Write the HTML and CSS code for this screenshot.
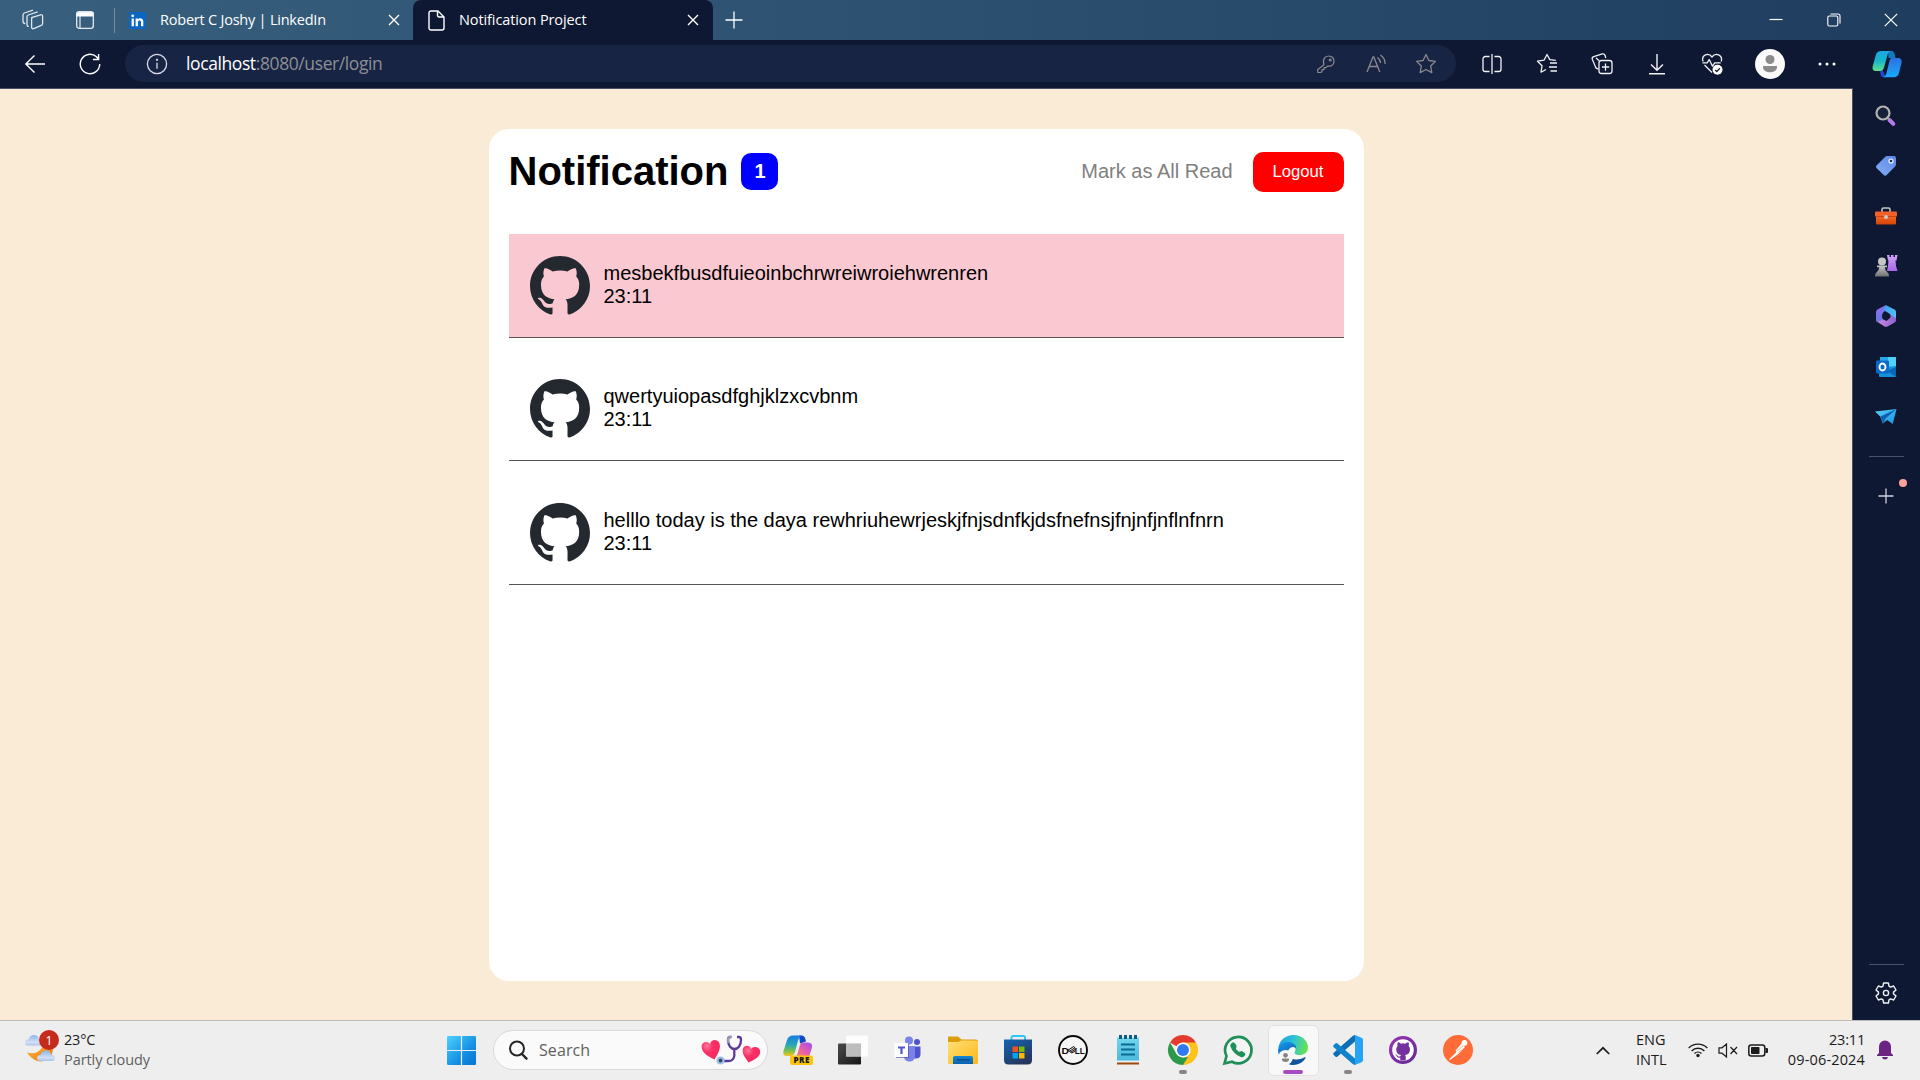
FILE: index.html
```html
<!DOCTYPE html>
<html lang="en">
<head>
<meta charset="utf-8">
<title>Notification Project</title>
<link rel="stylesheet" href="styles.css">
</head>
<body>
<svg class="defs" width="0" height="0" aria-hidden="true">
  <defs>
    <symbol id="octocat" viewBox="0 0 16 16"><path d="M8 0C3.58 0 0 3.58 0 8c0 3.54 2.29 6.53 5.47 7.59.4.07.55-.17.55-.38 0-.19-.01-.82-.01-1.49-2.01.37-2.53-.49-2.69-.94-.09-.23-.48-.94-.82-1.13-.28-.15-.68-.52-.01-.53.63-.01 1.08.58 1.23.82.72 1.21 1.87.87 2.33.66.07-.52.28-.87.51-1.07-1.78-.2-3.64-.89-3.64-3.95 0-.87.31-1.59.82-2.15-.08-.2-.36-1.02.08-2.12 0 0 .67-.21 2.2.82.64-.18 1.32-.27 2-.27s1.36.09 2 .27c1.53-1.04 2.2-.82 2.2-.82.44 1.1.16 1.92.08 2.12.51.56.82 1.27.82 2.15 0 3.07-1.87 3.75-3.65 3.95.29.25.54.73.54 1.48 0 1.07-.01 1.93-.01 2.2 0 .21.15.46.55.38A8.01 8.01 0 0 0 16 8c0-4.42-3.58-8-8-8z"/></symbol>
    <symbol id="cross" viewBox="0 0 12 12"><path d="M1 1l10 10M11 1L1 11" fill="none" stroke="currentColor" stroke-width="1.4"/></symbol>
    <linearGradient id="gWin" x1="0" y1="0" x2="1" y2="1"><stop offset="0" stop-color="#4dd2ff"/><stop offset=".6" stop-color="#1590e4"/><stop offset="1" stop-color="#0574d0"/></linearGradient>
    <linearGradient id="gCopA" x1="0" y1="0" x2="0" y2="1"><stop offset="0" stop-color="#1aa6e8"/><stop offset=".5" stop-color="#19b5c8"/><stop offset="1" stop-color="#5fe08a"/></linearGradient>
    <linearGradient id="gCopB" x1="0" y1="0" x2="0" y2="1"><stop offset="0" stop-color="#2f6fe0"/><stop offset="1" stop-color="#19a9fb"/></linearGradient>
    <linearGradient id="gPreA" x1="0" y1="0" x2="0" y2="1"><stop offset="0" stop-color="#1a7be0"/><stop offset=".45" stop-color="#25a7b8"/><stop offset=".75" stop-color="#7cc04c"/><stop offset="1" stop-color="#f5c71b"/></linearGradient>
    <linearGradient id="gPreB" x1="1" y1="0" x2="0" y2="1"><stop offset="0" stop-color="#9a4df0"/><stop offset=".5" stop-color="#e45dae"/><stop offset="1" stop-color="#fb8a58"/></linearGradient>
    <linearGradient id="gTag" x1="1" y1="0" x2="0" y2="1"><stop offset="0" stop-color="#5a86e6"/><stop offset="1" stop-color="#84aef4"/></linearGradient>
    <linearGradient id="gBox" x1="0" y1="0" x2="0" y2="1"><stop offset="0" stop-color="#fb6a2c"/><stop offset="1" stop-color="#d34408"/></linearGradient>
    <linearGradient id="gPawn" x1="0" y1="0" x2="0" y2="1"><stop offset="0" stop-color="#c8c8c8"/><stop offset="1" stop-color="#707070"/></linearGradient>
    <linearGradient id="gRook" x1="0" y1="0" x2="0" y2="1"><stop offset="0" stop-color="#d3a5fb"/><stop offset="1" stop-color="#a765e4"/></linearGradient>
    <linearGradient id="gHexA" x1="0" y1="0" x2=".4" y2="1"><stop offset="0" stop-color="#9a6ff0"/><stop offset="1" stop-color="#5a78dd"/></linearGradient>
    <linearGradient id="gHexB" x1="0" y1="0" x2="1" y2="1"><stop offset="0" stop-color="#3aa0ee"/><stop offset="1" stop-color="#5cc6f8"/></linearGradient>
    <linearGradient id="gHexC" x1="0" y1="0" x2="1" y2="0"><stop offset="0" stop-color="#d08be0"/><stop offset="1" stop-color="#8a62cc"/></linearGradient>
    <linearGradient id="gPlane" x1="0" y1="0" x2="1" y2="1"><stop offset="0" stop-color="#5ad0fa"/><stop offset="1" stop-color="#1494e4"/></linearGradient>
    <linearGradient id="gFolder" x1="0" y1="0" x2="1" y2="1"><stop offset="0" stop-color="#ffe07a"/><stop offset="1" stop-color="#fdb714"/></linearGradient>
    <linearGradient id="gBlue" x1="0" y1="0" x2="0" y2="1"><stop offset="0" stop-color="#1385d6"/><stop offset="1" stop-color="#0a63ae"/></linearGradient>
    <linearGradient id="gStore" x1="0" y1="0" x2=".6" y2="1"><stop offset="0" stop-color="#1266b4"/><stop offset="1" stop-color="#25355c"/></linearGradient>
    <linearGradient id="gNote" x1="0" y1="0" x2="0" y2="1"><stop offset="0" stop-color="#74d6ee"/><stop offset="1" stop-color="#48b8dc"/></linearGradient>
    <linearGradient id="gEdgeA" x1="0" y1=".3" x2="1" y2=".5"><stop offset="0" stop-color="#1a9fe6"/><stop offset=".5" stop-color="#2fc3d6"/><stop offset="1" stop-color="#66e34c"/></linearGradient>
    <linearGradient id="gEdgeB" x1="0" y1="0" x2=".6" y2="1"><stop offset="0" stop-color="#1c9aea"/><stop offset="1" stop-color="#0b62b8"/></linearGradient>
    <linearGradient id="gGit" x1="0" y1="0" x2="1" y2="1"><stop offset="0" stop-color="#9a35b5"/><stop offset="1" stop-color="#5e2a94"/></linearGradient>
    <linearGradient id="gCloud" x1="0" y1="0" x2="0" y2="1"><stop offset="0" stop-color="#8db4ee"/><stop offset=".7" stop-color="#d3e0f5"/><stop offset="1" stop-color="#a8c2ee"/></linearGradient>
    <linearGradient id="gMoon" x1="0" y1="0" x2="1" y2="1"><stop offset="0" stop-color="#f9b233"/><stop offset="1" stop-color="#ee7414"/></linearGradient>
    <linearGradient id="gDark" x1="0" y1="0" x2="1" y2="1"><stop offset="0" stop-color="#4a4a4a"/><stop offset="1" stop-color="#161616"/></linearGradient>
    <radialGradient id="gHeart" cx=".3" cy=".3" r=".8"><stop offset="0" stop-color="#ff7a9a"/><stop offset=".4" stop-color="#fb2f68"/><stop offset="1" stop-color="#f22a5e"/></radialGradient>
  </defs>
</svg>

<header class="tabstrip">
  <div class="strip-tools">
    <svg width="22" height="22" viewBox="0 0 22 22" fill="none" stroke="#dfe6ee" stroke-width="1.3" stroke-linejoin="round"><path d="M9.5 8.6L18.6 5.8q2-.4 2 1.4v7.2q0 1.600-1.400 2l-7.600 3.200q-2 .6-2-1.600V10q0-1.400 1.600-2zM6.800 17.400q-1.800.2-1.800-1.800V7.800q0-1.400 1.200-1.800l9.400-3.100M3.300 14.500Q1 14.400 1 12.500V6.200q0-1.600 1.400-2.200L11 1.200"/></svg>
    <svg width="20" height="20" viewBox="0 0 20 20"><path d="M4 1.200h12a3 3 0 0 1 3 3V6.500H1V4.200a3 3 0 0 1 3-3z" fill="#fff"/><rect x="1.700" y="1.800" width="16.600" height="16.600" rx="2.600" fill="none" stroke="#e4eaf0" stroke-width="1.300"/><path d="M5 6v12" stroke="#e4eaf0" stroke-width="1.200"/></svg>
  </div>
  <div class="tab">
    <svg class="fav" width="17" height="17" viewBox="0 0 17 17"><rect width="17" height="17" fill="#0a66c2"/><circle cx="3.700" cy="3.800" r="1.400" fill="#fff"/><path d="M2.600 6.500h2.300V14.300H2.600zM6.600 6.500h2.200v1c1.200-1.900 5.500-1.700 5.500 2v4.800H12V10c0-2.200-3-2-3 .1v4.200H6.600z" fill="#fff"/></svg>
    <span class="tab-title t1">Robert C Joshy | LinkedIn</span>
    <svg class="close" width="12" height="12"><use href="#cross"/></svg>
  </div>
  <div class="tab active">
    <svg class="fav" width="17" height="21" viewBox="0 0 17 21" fill="none" stroke="#fff" stroke-width="1.400" stroke-linejoin="round"><path d="M3 1h7l6 6v11a2 2 0 0 1-2 2H3a2 2 0 0 1-2-2V3a2 2 0 0 1 2-2zM9.500 1v4.500a1.500 1.500 0 0 0 1.500 1.500h5"/></svg>
    <span class="tab-title t2">Notification Project</span>
    <svg class="close" width="12" height="12"><use href="#cross"/></svg>
  </div>
  <svg class="newtab" width="18" height="18" viewBox="0 0 18 18" stroke="#fff" stroke-width="1.300"><path d="M.500 9h17M9 .500v17"/></svg>
  <div class="window-buttons">
    <svg width="14" height="14" viewBox="0 0 14 14" stroke="#fff" stroke-width="1.200"><path d="M.500 6.500h13"/></svg>
    <svg width="14" height="14" viewBox="0 0 14 14" fill="none" stroke="#fff" stroke-width="1.100"><rect x=".800" y="3" width="10" height="10" rx="1.500"/><path d="M3.500 1H11a2 2 0 0 1 2 2v7.500"/></svg>
    <svg width="14" height="14" viewBox="0 0 14 14" stroke="#fff" stroke-width="1.200"><path d="M.800.800l12.400 12.400M13.200.800L.800 13.200"/></svg>
  </div>
</header>

<nav class="toolbar">
  <div class="nav-tools">
    <svg width="22" height="20" viewBox="0 0 22 20" fill="none" stroke="#fff" stroke-width="1.400"><path d="M21 10H1.500M10.500 1.500L1.800 10l8.700 8.500"/></svg>
    <svg width="22" height="22" viewBox="0 0 22 22" fill="none" stroke="#fff" stroke-width="1.400"><path d="M20.700 11A9.700 9.700 0 1 1 17.500 3.800L19.400 6M19.600 1v5.500H14"/></svg>
  </div>
  <div class="address">
    <svg width="22" height="22" viewBox="0 0 22 22" fill="none" stroke="#d9dce4" stroke-width="1.300"><circle cx="11" cy="11" r="9.600"/><path d="M11 9.800v6"/><circle cx="11" cy="6.800" r=".5" fill="#d9dce4"/></svg>
    <span class="url"><b>localhost</b>:8080/user/login</span>
    <div class="address-tools">
      <svg width="20" height="20" viewBox="0 0 20 20" fill="none" stroke="#8a8a8e" stroke-width="1.200" stroke-linejoin="round"><path d="M8 10.800C6 5.500 9 2 12.800 2c3.500 0 5.600 2.700 5.200 5.800-.4 3.400-3.400 5-6.300 4.200L10 13.700H8v2H6v1.800l-1.200 1H1.800v-3z"/><circle cx="14.200" cy="6" r=".9"/></svg>
      <svg width="22" height="20" viewBox="0 0 22 20" fill="none" stroke="#8a8a8e" stroke-width="1.300"><path d="M2 18L8 3h.8l6 15M4.300 12.500h8.200M12.500 3.500q3 2.200 3 5.500M15.500 1q4.800 3.500 4.600 9"/></svg>
      <svg width="22" height="22" viewBox="0 0 22 22" fill="none" stroke="#8a8a8e" stroke-width="1.300" stroke-linejoin="round"><path d="M11 1.500l2.900 6 6.500.9-4.700 4.600 1.100 6.600L11 16.500l-5.800 3.100 1.100-6.600L1.600 8.400l6.500-.9z"/></svg>
    </div>
  </div>
  <div class="browser-tools">
    <svg width="20" height="20" viewBox="0 0 20 20" fill="none" stroke="#f1f2f5" stroke-width="1.300"><path d="M10 0v20M7.500 2.500H3.300A2.300 2.300 0 0 0 1 4.800v10.400a2.300 2.300 0 0 0 2.300 2.300h4.200M12.500 2.500h4.200A2.300 2.300 0 0 1 19 4.800v10.400a2.300 2.300 0 0 1-2.300 2.300h-4.200"/></svg>
    <svg width="22" height="21" viewBox="0 0 22 21" fill="none" stroke="#f1f2f5" stroke-width="1.300" stroke-linejoin="round"><path d="M19.800 7.300l-6-.7L11 1.500 8 7.200l-6.500 1L6 12.800 5 19.200l5-2.700M14 10h7M13 14h8M14.500 18H21"/></svg>
    <svg width="22" height="22" viewBox="0 0 22 22" fill="none" stroke="#f1f2f5" stroke-width="1.300"><rect x="8" y="7.500" width="13" height="13" rx="2.500"/><path d="M14.500 10.500v7.200M11 14h7.200M7.500 15.800c-2 .1-2.800-.8-3.100-2.200L1.300 6.400C.9 5 1.500 4 2.800 3.600l8.400-2.700c1.500-.3 2.500.3 2.900 1.600l.7 2.500M8 7.500L5 5"/></svg>
    <svg width="18" height="22" viewBox="0 0 18 22" fill="none" stroke="#f1f2f5" stroke-width="1.400"><path d="M9 1v16M3 11.500L9 17.300l6-5.800M1 20.800h16"/></svg>
    <svg width="22" height="22" viewBox="0 0 22 22" fill="none" stroke="#f1f2f5" stroke-width="1.300" stroke-linejoin="round"><path d="M2 8.500C0 1.500 7.500-.8 11 4c3.500-4.800 11-2.500 9.300 4.500M1.500 9.800h4.700l2-3.300 3.300 6.700 2.200-3.400h6M3.500 12L11 19.500"/><circle cx="16.500" cy="16.800" r="5" fill="#fff" stroke="none"/><path d="M14.200 17l1.600 1.600 3-3.300" stroke="#101933"/></svg>
    <svg width="30" height="30" viewBox="0 0 30 30"><circle cx="15" cy="15" r="15" fill="#fafafa"/><circle cx="15" cy="10.500" r="4.500" fill="#8b8b8b"/><path d="M8 17h14v1.500a6 4.700 0 0 1-6 4.700h-2a6 4.700 0 0 1-6-4.700z" fill="#8b8b8b"/></svg>
    <svg width="18" height="6" viewBox="0 0 18 6" fill="#fff"><circle cx="2" cy="3" r="1.500"/><circle cx="9" cy="3" r="1.500"/><circle cx="16" cy="3" r="1.500"/></svg>
    <svg width="30" height="28" viewBox="0 0 30 28"><path d="M9 17l5 10.200h-2c-4 0-3-3.200-4-7z" fill="#2446d6"/><path d="M16 1h3.500c2.500 0 3 2 4 7h-7z" fill="#0f7bbd"/><path d="M9 1h9.500c-2 .6-2.700 2.500-3.300 5l-3 11c-.8 2.800-1.900 4-4.700 4H4.300C1 21 0 19 .8 16l3-11C4.600 2.400 6.300 1 9 1z" fill="url(#gCopA)"/><path d="M20 8h5.500c3.500 0 4.700 2 4 5l-2.600 10.300c-.8 2.600-2.500 3.900-5 3.900H11c2.400-.6 3-2.200 3.600-4.600l2.600-10.600C17.800 9.300 18.300 8 20 8z" fill="url(#gCopB)"/></svg>
  </div>
</nav>

<div class="viewport">
  <main class="page">
    <section class="card">
      <div class="card-head">
        <h1>Notification</h1>
        <span class="count">1</span>
        <span class="mark-all">Mark as All Read</span>
        <button class="logout">Logout</button>
      </div>
      <ul class="list">
        <li class="item unread"><svg class="avatar" width="60" height="60"><use href="#octocat"/></svg><div class="text"><p>mesbekfbusdfuieoinbchrwreiwroiehwrenren</p><p>23:11</p></div></li>
        <li class="item"><svg class="avatar" width="60" height="60"><use href="#octocat"/></svg><div class="text"><p>qwertyuiopasdfghjklzxcvbnm</p><p>23:11</p></div></li>
        <li class="item"><svg class="avatar" width="60" height="60"><use href="#octocat"/></svg><div class="text"><p>helllo today is the daya rewhriuhewrjeskjfnjsdnfkjdsfnefnsjfnjnfjnflnfnrn</p><p>23:11</p></div></li>
      </ul>
    </section>
  </main>
  <aside class="sidebar">
    <div class="side-apps">
      <svg width="22" height="22" viewBox="0 0 22 22" fill="none"><path d="M14.500 15l3.800 3.800" stroke="#b47af0" stroke-width="4" stroke-linecap="round"/><path d="M12.500 12.500l2 2" stroke="#999" stroke-width="2"/><circle cx="8" cy="8" r="6.500" stroke="#b5b4b0" stroke-width="2.200" fill="#17203a"/></svg>
      <svg width="22" height="22" viewBox="0 0 22 22"><path d="M12 1h7q2 0 2 2v6q0 1.500-1 2.500l-8.300 8.600q-1.500 1.400-3 0L1.500 13q-1.200-1.200 0-2.600L10 2q1-1 2-1z" fill="url(#gTag)"/><circle cx="16" cy="6" r="2.600" fill="#e8eefb"/><circle cx="16" cy="6" r="1.300" fill="#1b2b50"/></svg>
      <svg width="22" height="20" viewBox="0 0 22 20"><path d="M7 6V3.500Q7 2 8.500 2h5Q15 2 15 3.500V6" fill="none" stroke="#c5c5c5" stroke-width="1.600"/><rect x="1" y="9" width="20" height="9.500" rx="1" fill="url(#gBox)"/><rect x="0" y="5.500" width="22" height="5" rx="1" fill="#f4602a"/><path d="M0 10.500h22" stroke="#b33a08" stroke-width=".7"/><circle cx="11" cy="11" r="2" fill="#c9c9c9"/></svg>
      <svg width="24" height="24" viewBox="0 0 24 24"><path d="M13 1h2.500v2H17V1h2.500v2H21V1h2.500l-1 5.500h-1L22 12l1.500 5H13l1-5 .5-5.500H14z" fill="url(#gRook)"/><circle cx="8" cy="7.500" r="4" fill="#c6c6c6"/><path d="M3 11.500h10v1.800h-2.200Q11 17 13.500 18.500q1.500.7 1.500 4H1q0-3.300 1.500-4Q5 17 5.200 13.300H3z" fill="url(#gPawn)"/></svg>
      <svg width="22" height="22" viewBox="0 0 22 22"><path d="M10 .500L2.500 4.500Q1 5.300 1 7v9l6.500 2.500V10Q7.500 7 10 6l3-5z" fill="url(#gHexA)"/><path d="M21 9v6.500q0 1.200-1.300 2l-7.200 4q-1.500.7-3 0L1 16q4 1.500 6.500-2l4 2 4-3.500V9z" fill="url(#gHexC)"/><path d="M10 .500h1.500l8 4Q21 5.300 21 7v6l-6.500-4L10 6q-1-3 0-5.500z" fill="url(#gHexB)"/><path d="M11 6.800l3.700 2.100v4.200L11 15.200l-3.700-2.100V8.900z" fill="#101933"/></svg>
      <svg width="22" height="22" viewBox="0 0 22 22"><path d="M5 1h15q1 0 1 1v9L5 12z" fill="#28a8ea"/><path d="M13 1h7q1 0 1 1v9h-8z" fill="#50d0f7"/><path d="M4 11h8l9-1v10q0 1-1 1H5q-1 0-1-1z" fill="#1490df"/><path d="M21 11v9.500L12 15z" fill="#0c63b4"/><rect x="1" y="4.500" width="13" height="13" rx="1.200" fill="#0a6ac8"/><ellipse cx="7.500" cy="11" rx="3" ry="3.500" fill="none" stroke="#fff" stroke-width="1.900"/></svg>
      <svg width="22" height="18" viewBox="0 0 22 18"><path d="M0 3.500L21.500 1l-3.800 15-5.500-4-4.500 3.500-2.500-7z" fill="url(#gPlane)"/><path d="M5.500 8.500L21.500 1l-11 9.500-2.600 5.200z" fill="#0b5fb0"/></svg>
    </div>
    <hr>
    <div class="side-add"><svg width="16" height="16" viewBox="0 0 16 16" stroke="#cfd3dc" stroke-width="1.300"><path d="M.500 8h15M8 .500v15"/></svg><i class="dot"></i></div>
    <hr class="foot-line">
    <svg class="gear" width="22" height="22" viewBox="0 0 22 22" fill="none" stroke="#f0f1f5" stroke-width="1.400" stroke-linejoin="round"><path d="M8.600 1h4.800l.6 3.200 1.500.9 3.100-1.100L21 8l-2.500 2.100v1.800L21 14l-2.400 4-3.100-1.100-1.500.9-.6 3.200H8.600L8 17.800l-1.500-.9L3.400 18 1 14l2.500-2.100v-1.800L1 8l2.400-4 3.100 1.100L8 4.200z"/><circle cx="11" cy="11" r="2.600"/></svg>
  </aside>
</div>

<footer class="taskbar">
  <div class="weather">
    <div class="weather-icon">
      <svg width="32" height="30" viewBox="0 0 32 30"><path d="M3 19.500q10 3 15-5h11q0 9-6 12.500-7 3-13-.5-5-3-7-7z" fill="url(#gMoon)"/><path d="M4 12.500Q1 12.500 1 9.500t3.500-3Q6 2 10 2q4 0 5 4 4 .500 4 4 0 2.500-3 2.500z" fill="url(#gCloud)"/><path d="M16.500 28Q13 28 13 25t3.500-3q1.500-4.500 5.500-4.500t5 4q4 .500 4 3.500t-3 3z" fill="url(#gCloud)"/></svg>
      <span class="badge">1</span>
    </div>
    <div class="weather-text"><span>23°C</span><span class="muted">Partly cloudy</span></div>
  </div>
  <div class="apps">
    <div class="slot start"><svg width="29" height="29" viewBox="0 0 29 29"><rect width="29" height="29" rx="1.200" fill="url(#gWin)"/><path d="M14.500 0v29M0 14.500h29" stroke="#eee" stroke-width="1.200"/></svg></div>
    <div class="search">
      <svg width="20" height="20" viewBox="0 0 20 20" fill="none" stroke="#262626" stroke-width="2"><circle cx="9" cy="8.500" r="7"/><path d="M14 14l4.500 4.700" stroke-width="2.400" stroke-linecap="round"/></svg>
      <span>Search</span>
      <svg class="hearts" width="60" height="30" viewBox="0 0 60 30"><path d="M13.500 24.500C8 22 .500 18 .600 11.500.700 7 6 5.500 9 9c1-4.800 7.300-5.200 9.200-1.200C20.500 13 17 19 13.500 24.500z" fill="url(#gHeart)"/><path d="M47.500 27.500c-3-4.500-7-9-5.500-14 1.500-4 7-3.500 8 .5 3-3.500 9-2 9.200 2.500.1 5.500-6.200 8.500-11.700 11z" fill="url(#gHeart)"/><path d="M30.500 2H28.500q-1.500.2-1.500 3c0 12 13 12 13 0q0-3-2-3H36M33.300 14v6.500q-.3 5.500-6 5.500H21" fill="none" stroke="#5b3a9c" stroke-width="2.300"/><path d="M27 8V4.500Q27 2 30 2" fill="none" stroke="#999bb0" stroke-width="2.300"/><circle cx="19.500" cy="25.500" r="4" fill="#9fc0e6"/><circle cx="19.500" cy="25.500" r="1.900" fill="#3a4a60"/></svg>
    </div>
    <div class="slot"><svg width="30" height="30" viewBox="0 0 30 30"><path d="M16 .500h3q3 0 4 6l-6 2z" fill="#1447c8"/><path d="M10 .500h8.500q-2.500 1-3.300 4.500L12 17q-1 4-4.500 4H3Q-.5 20.500.500 16L4 5Q5.500.500 10 .500z" fill="url(#gPreA)"/><path d="M20 7.500h5q5 .500 4 5L26 22H12q2-1 2.700-4L17 10q.7-2.500 3-2.500z" fill="url(#gPreB)"/><rect x="7" y="20.500" width="23" height="9.500" rx="2" fill="#fcc40d"/><text x="18.600" y="28.300" text-anchor="middle" class="pre">PRE</text></svg></div>
    <div class="slot"><svg width="30" height="30" viewBox="0 0 30 30"><rect x="0" y="8.500" width="23" height="21" rx="1" fill="url(#gDark)"/><rect x="8" y=".500" width="22" height="21" rx="1" fill="#fff" fill-opacity=".85"/><rect x="8" y="8.500" width="15" height="13" fill="#bdbdbd"/></svg></div>
    <div class="slot"><svg width="28" height="28" viewBox="0 0 28 28"><circle cx="23" cy="6" r="3" fill="#4f55c8"/><path d="M19 10.500h7.500V18q0 4.500-4.500 4.500h-3z" fill="#4f55c8"/><circle cx="15" cy="4.500" r="4" fill="#7b83eb"/><path d="M10 10h11v9.500q0 6-5.500 6-5 0-5.500-5z" fill="#7b83eb"/><path d="M2 8h13v14H2z" fill="#4246a8" opacity=".6"/><rect x=".500" y="7" width="13.500" height="14" fill="#fff"/><path d="M4 10.500h7v2H8.600V18H6.400v-5.500H4z" fill="#5059c9"/></svg></div>
    <div class="slot"><svg width="30" height="28" viewBox="0 0 30 28"><path d="M0 1.500Q0 .500 1 .500h9l3.500 3H28q2 0 2 2V10H0z" fill="#dd9d08"/><path d="M0 6h10.500L13 4.500h15.500q1.500 0 1.500 1.500v20.500q0 1.500-1.500 1.500h-27Q0 28 0 26.500z" fill="url(#gFolder)"/><path d="M5 28v-6q0-2 2-2h16q2 0 2 2v6z" fill="url(#gBlue)"/><path d="M9 23.800h13" stroke="#0c4680" stroke-width="1.300"/></svg></div>
    <div class="slot"><svg width="30" height="30" viewBox="0 0 30 30"><path d="M8.500 6V2.500Q8.500 1 10 1h10.500Q22 1 22 2.500V6" fill="none" stroke="#30c6f6" stroke-width="2"/><path d="M1 4.500h28V25q0 4.500-4.500 4.500h-19Q1 29.500 1 25z" fill="url(#gStore)"/><path d="M9.500 11.500h5.500V17H9.500z" fill="#f25022"/><path d="M16 11.500h5.500V17H16z" fill="#7fba00"/><path d="M9.500 18h5.500v5.500H9.500z" fill="#00a4ef"/><path d="M16 18h5.500v5.500H16z" fill="#ffb900"/></svg></div>
    <div class="slot"><svg width="30" height="30" viewBox="0 0 30 30"><circle cx="15" cy="15" r="14" fill="#f6f6f6" stroke="#0a0a0a" stroke-width="1.900"/><text x="3.600" y="18.600" class="dell" textLength="7.500" lengthAdjust="spacingAndGlyphs">D</text><text x="16.800" y="18.600" class="dell" textLength="10" lengthAdjust="spacingAndGlyphs">LL</text><path d="M10 15.200l5.500-3.600 1.700 1.200M11.500 16.300l5.500-3.600M12.700 17.300l5.500-3.600M10.300 15.200l3.500 2.800 3.600-2.200" fill="none" stroke="#0a0a0a" stroke-width="1"/></svg></div>
    <div class="slot"><svg width="24" height="30" viewBox="0 0 24 30"><path d="M1 26.500h22v3H1z" fill="#9c4a0a"/><path d="M1 2.500h22V26H1z" fill="url(#gNote)"/><path d="M1 25.500h22v2H1z" fill="#e8f0f3"/><path d="M5 9.500h14M5 14.500h14M5 19.500h14" stroke="#0b6b93" stroke-width="1.900"/><path d="M4.500 0v4M9.500 0v4M14.500 0v4M19.500 0v4" stroke="#125a78" stroke-width="3"/></svg></div>
    <div class="slot running"><svg width="30" height="30" viewBox="0 0 30 30"><path d="M2 7.500A15 15 0 0 1 28 7.500L15 15z" fill="#e33b2e"/><path d="M28 7.500A15 15 0 0 1 15 30l-1-7 7-8-6-7.500z" fill="#fcc31e"/><path d="M15 30A15 15 0 0 1 2 7.500L8.500 19l6.500 3.500 5-.5z" fill="#2a9a48"/><circle cx="15" cy="15" r="7.600" fill="#fff"/><circle cx="15" cy="15" r="6" fill="#2f7af0"/></svg></div>
    <div class="slot"><svg width="30" height="30" viewBox="0 0 30 30"><path d="M1.500 28.500l2-7.500A13.200 13.200 0 1 1 9 26.700z" fill="#f4f4f4" stroke="#1f8f58" stroke-width="2.700"/><path transform="translate(7.3 7.3) scale(.94)" d="M1.885.511a1.745 1.745 0 0 1 2.610.163L6.290 2.980c.329.423.445.974.315 1.494l-.547 2.190a.68.68 0 0 0 .178.643l2.457 2.457a.68.68 0 0 0 .644.178l2.189-.547a1.750 1.750 0 0 1 1.494.315l2.306 1.794c.829.645.905 1.870.163 2.611l-1.034 1.034c-.74.740-1.846 1.065-2.877.702a18.600 18.600 0 0 1-7.010-4.420 18.600 18.600 0 0 1-4.420-7.009c-.362-1.030-.037-2.137.703-2.877z" fill="#1f8f58"/></svg></div>
    <div class="slot running focused"><svg width="30" height="30" viewBox="0 0 30 30"><path d="M.3 13C1.500 5 8 0 15.500 0 24 0 30 6 30 12.500c0 5-4 7.500-8.500 7.500-4 0-5.800-1.400-4.500-3.500 2-4-1.500-7-7-7-4 0-7.500 1-9.700 3.500z" fill="url(#gEdgeA)"/><path d="M0 15C1 9.500 5.500 7 10 7c5.500 0 9 4 8.300 7.500-.3-1.800-2-2.800-3.800-2.500-4 .8-5.500 5-4.500 9L1 20q-1-2.500-1-5z" fill="url(#gEdgeB)"/><path d="M10.500 16c-1 9 9 10.500 16 6.300.8-.5 1.400.2.900 1C24.500 28 20 30 15.500 30c-4 0-8-2-9-5z" fill="#12559f"/><circle cx="7.500" cy="22.500" r="7.500" fill="#f8f8f8"/><circle cx="7.500" cy="20.300" r="2.400" fill="#858585"/><path d="M3.800 23.500h7.400q0 3.500-3.700 3.500t-3.700-3.500z" fill="#858585"/></svg></div>
    <div class="slot running"><svg width="30" height="30" viewBox="0 0 30 30"><path d="M22 6.500L4.500 21.500q-1.200 1-2.200 0L.500 19.800q-.8-1 .2-2L20 .800 22 0z" fill="#0f6fb4"/><path d="M22 23.500L4.500 8.500q-1.200-1-2.200 0L.500 10.200q-.8 1 .2 2L20 29.200l2 .8z" fill="#0f84cc"/><path d="M22 0l7 3q1 .500 1 1.700v20.600q0 1.200-1 1.700l-7 3z" fill="#27a3f3"/></svg></div>
    <div class="slot"><svg width="28" height="28" viewBox="0 0 28 28"><circle cx="14" cy="14" r="14" fill="url(#gGit)"/><circle cx="14" cy="14" r="10.800" fill="#fff"/><svg x="4" y="4.500" width="20" height="20" viewBox="0 0 16 16"><path d="M5.800 16V13.700c-2 .4-2.500-.5-2.700-.9-.1-.3-.5-1-.8-1.200-.3-.1-.7-.5 0-.5.600 0 1.100.6 1.300.8.700 1.200 1.800.9 2.300.7.100-.5.300-.9.500-1.100C4 11.300 2.600 10 2.600 7.200c0-1.100.4-2 1.100-2.800-.2-.6-.4-1.600.1-2.900 0 0 .9-.1 2.500 1a8 8 0 0 1 3.600 0c1.600-1.100 2.500-1 2.500-1 .500 1.300.3 2.300.1 2.900.7.800 1.100 1.700 1.100 2.800 0 2.800-1.500 4.100-4 4.300.3.300.6.900.6 1.700V16z" fill="#75309f"/></svg></svg></div>
    <div class="slot"><svg width="30" height="30" viewBox="0 0 30 30"><circle cx="15" cy="15" r="15" fill="#ff6c37"/><circle cx="21.500" cy="7.800" r="2.900" fill="#fff"/><path d="M18.500 8.500l3.500 3.500-6 6.500-9 6.500-.8-.8 7.300-7.200-1-1.500z" fill="#fff"/><path d="M13.500 16.500l6.500-5.500M15 18l7-5.500" stroke="#ff9b78" stroke-width=".8"/></svg></div>
  </div>
  <div class="tray">
    <svg class="chev" width="14" height="9" viewBox="0 0 14 9" fill="none" stroke="#1c1c1c" stroke-width="1.700"><path d="M.800 8L7 1.800 13.200 8"/></svg>
    <div class="lang"><span>ENG</span><span>INTL</span></div>
    <div class="status">
      <svg width="20" height="16" viewBox="0 0 20 16" fill="none" stroke="#1c1c1c" stroke-width="1.400"><path d="M.700 6A13 13 0 0 1 19.300 6M3.600 8.900a9 9 0 0 1 12.800 0M6.500 11.600a5 5 0 0 1 7 0"/><circle cx="10" cy="13.500" r="1.700" fill="#1c1c1c" stroke="none"/></svg>
      <svg width="20" height="15" viewBox="0 0 20 15" fill="none" stroke="#1c1c1c" stroke-width="1.200"><path d="M1 4.800v5.400h3L8.500 14V1L4 4.800zM12.500 4l6.500 7M19 4l-6.500 7"/></svg>
      <svg width="20" height="13" viewBox="0 0 20 13"><rect x=".8" y="1" width="16" height="11" rx="2.500" fill="none" stroke="#1c1c1c" stroke-width="1.500"/><rect x="3" y="3" width="8.500" height="7" rx=".8" fill="#1c1c1c"/><path d="M17.500 4H19q1 0 1 1v3q0 1-1 1h-1.500z" fill="#1c1c1c"/></svg>
    </div>
    <div class="clock"><span>23:11</span><span class="date">09-06-2024</span></div>
    <svg class="bell" width="16" height="20" viewBox="0 0 16 20" fill="#6b2483"><path d="M2 13V6.500a6 6 0 0 1 12 0V13l2 2v1H0v-1zM5 17h6q-.5 2.500-3 2.500T5 17z"/></svg>
  </div>
</footer>
</body>
</html>
```
FILE: styles.css
```css
* { box-sizing: border-box; }
html, body { height: 100%; }
body {
  margin: 0;
  display: flex;
  flex-direction: column;
  overflow: hidden;
  font-family: "Open Sans", "Noto Sans", sans-serif;
  background: #faebd7;
}
svg { display: block; flex: none; overflow: visible; }
.defs { position: absolute; }

/* Tab strip */
.tabstrip {
  flex: none;
  height: 40px;
  display: flex;
  align-items: center;
  background: linear-gradient(90deg, #385f7d, #2c5070 50%, #1f3d5f);
  color: #fff;
  font-size: 14.5px;
}
.strip-tools {
  width: 115px;
  height: 25px;
  padding-left: 22px;
  display: flex;
  align-items: center;
  gap: 31px;
  border-right: 1px solid #7b8ea0;
}
.tab { width: 298px; height: 40px; padding: 0 13px 0 14px; display: flex; align-items: center; }
.tab.active { width: 300px; padding: 0 14px 0 15px; background: #0f1832; border-radius: 8px 8px 0 0; }
.tab-title { margin-left: 14px; white-space: nowrap; line-height: 20px; }
.t1 { letter-spacing: -.22px; }
.t2 { letter-spacing: -.1px; }
.close { margin-left: auto; }
.newtab { margin-left: 12px; }
.window-buttons { margin-left: auto; display: flex; gap: 43.5px; padding-right: 22px; }

/* Toolbar */
.toolbar {
  flex: none;
  height: 48px;
  padding-bottom: 1px;
  display: flex;
  align-items: center;
  background: #0f1832;
}
.nav-tools { width: 125px; padding-left: 24px; display: flex; align-items: center; gap: 33px; }
.address {
  width: 1331px;
  height: 37px;
  padding-left: 21px;
  display: flex;
  align-items: center;
  border-radius: 19px;
  background: #182443;
}
.url { margin: -1px 0 0 18px; font-size: 17.5px; line-height: 24px; letter-spacing: -.4px; color: #8d8f96; }
.url b { font-weight: 400; color: #fff; }
.address-tools { margin-left: auto; width: 152px; margin-right: 3px; display: grid; grid-template-columns: 50px 50px 50px; justify-items: center; align-items: center; }
.browser-tools {
  flex: 1;
  padding-left: 8.5px;
  display: grid;
  grid-template-columns: repeat(5, 55px) 61px 53px 1fr;
  justify-items: center;
  align-items: center;
}

/* Page and sidebar */
.viewport { flex: 1; display: flex; min-height: 0; }
.page {
  flex: 1;
  padding-top: 40px;
  border-top: 1px solid #474f66;
  border-right: 1px solid #474f66;
  background: #faebd7;
}
.card {
  width: 875px;
  height: 852px;
  margin: 0 auto;
  padding: 20px;
  border-radius: 20px;
  background: #fff;
  font-family: "Liberation Sans", Arial, sans-serif;
  font-size: 20px;
  line-height: 23px;
  color: #000;
}
.card-head { height: 45px; display: flex; align-items: center; }
h1 { margin: 0; font-size: 40px; line-height: 45px; font-weight: 700; }
.count {
  width: 37px;
  height: 37px;
  margin-left: 13px;
  border-radius: 10px;
  background: #00f;
  color: #fff;
  font-weight: 700;
  line-height: 36px;
  text-align: center;
}
.mark-all { margin-left: auto; color: #808080; }
.logout {
  width: 91px;
  height: 40px;
  margin: 1px 0 0 20px;
  padding: 0;
  border: 0;
  border-radius: 10px;
  background: #f00;
  color: #fff;
  font: 16.67px "Liberation Sans", Arial, sans-serif;
}
.list { margin: 40px 0 0; padding: 0; list-style: none; display: flex; flex-direction: column; gap: 20px; }
.item { height: 103.6px; padding: 1.2px 21px 0; display: flex; align-items: center; gap: 14px; border-bottom: 1px solid #555; }
.item.unread { background: #fac8d1; }
.avatar { fill: #24292f; }
.text { padding-bottom: 2px; }
.text p { margin: 0; white-space: nowrap; }

.sidebar { width: 67px; padding-right: 1px; background: #0f1832; display: flex; flex-direction: column; align-items: center; }
.side-apps { margin-top: 2.5px; display: grid; grid-template-rows: repeat(7, 50.2px); justify-items: center; align-items: center; }
.sidebar hr { width: 35px; height: 1px; margin: 14px 0 0; border: 0; background: #4a5166; }
.side-add { position: relative; margin-top: 31px; }
.dot { position: absolute; left: 21px; top: -9px; width: 8px; height: 8px; border-radius: 50%; background: #fba19c; }
.sidebar .foot-line { margin-top: auto; }
.gear { margin: 17px 0 16px; }

/* Taskbar */
.taskbar {
  flex: none;
  height: 60px;
  padding-bottom: 1px;
  display: flex;
  align-items: center;
  border-top: 1px solid #bcbcbc;
  background: #eee;
  color: #1c1c1c;
  font-size: 14.5px;
  line-height: 20px;
}
.weather { width: 433px; padding-left: 24px; display: flex; align-items: center; gap: 8px; }
.weather-icon { position: relative; margin-bottom: 5px; }
.badge {
  position: absolute;
  left: 15px;
  top: -3px;
  width: 20px;
  height: 20px;
  border-radius: 50%;
  background: #c42b1c;
  color: #fff;
  text-align: center;
  font-size: 13px;
}
.weather-text, .lang, .clock { display: flex; flex-direction: column; letter-spacing: -.2px; }
.muted { color: #5f5f5f; letter-spacing: -.07px; }
.apps { display: flex; align-items: center; }
.slot { position: relative; width: 55px; height: 58px; display: flex; align-items: center; justify-content: center; }
.start { padding-left: 1px; }
.search {
  width: 275px;
  height: 40px;
  margin: 0 2px 0 5px;
  padding: 0 6px 0 14px;
  display: flex;
  align-items: center;
  border: 1px solid #d9d9d9;
  border-radius: 20px;
  background: #fafafa;
  color: #606060;
  font-size: 16px;
}
.search span { margin-left: 11px; letter-spacing: .1px; }
.hearts { margin-left: auto; }
.pre { font: 800 8px "Open Sans", sans-serif; letter-spacing: .5px; fill: #1a1a1a; }
.dell { font: 700 9.5px "Liberation Sans", sans-serif; fill: #0a0a0a; }
.running::after {
  content: "";
  position: absolute;
  bottom: 5px;
  left: 23.5px;
  width: 8px;
  height: 4px;
  border-radius: 2px;
  background: #868686;
}
.focused::before {
  content: "";
  position: absolute;
  left: 3px;
  top: 4px;
  width: 49px;
  height: 49px;
  border: 1px solid #e2e2e2;
  border-radius: 6px;
  background: #f8f8f8;
}
.focused svg { position: relative; }
.focused::after { left: 17.5px; width: 20px; background: #a74cc0; }
.tray { flex: 1; display: flex; align-items: center; padding-right: 27px; }
.chev { margin-left: auto; }
.lang { width: 32px; margin-left: 26px; }
.lang span { letter-spacing: 0; }
.status { display: flex; align-items: center; gap: 10px; margin-left: 20px; }
.clock { width: 78px; margin-left: 19px; align-items: flex-end; }
.date { letter-spacing: .15px; }
.bell { margin-left: 12px; }
```
